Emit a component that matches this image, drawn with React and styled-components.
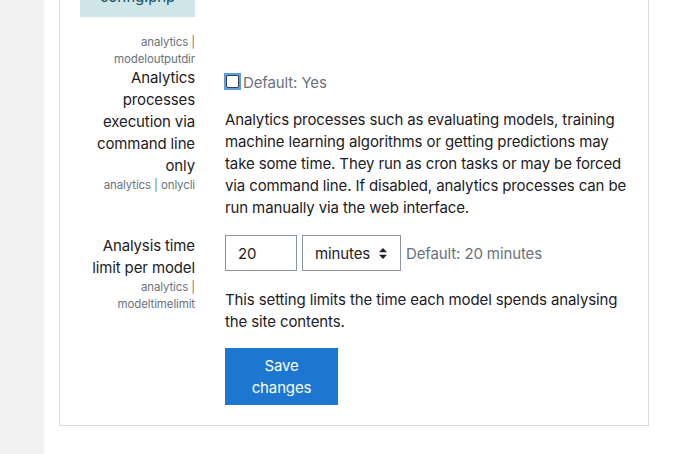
import React from 'react';
import styled, { createGlobalStyle } from 'styled-components';

const Global = createGlobalStyle`
  html, body {
    margin: 0;
    padding: 0;
    background: #fff;
    overflow: hidden;
  }
  body {
    font-family: Inter, "Liberation Sans", Arial, sans-serif;
    color: #1d2125;
    letter-spacing: -0.12px;
  }
`;

const Page = styled.div`
  display: flex;
  height: 454px;
`;

const Drawer = styled.div`
  width: 44px;
  flex-shrink: 0;
  background: #f2f2f2;
`;

const Main = styled.div`
  flex: 1;
  padding-left: 15px;
  padding-right: 40px;
`;

const Panel = styled.div`
  border: 1px solid #dcdcdc;
  border-top: none;
  padding: 0 17px 20px 20px;
  margin-top: -34px;
`;

const Grid = styled.div`
  display: grid;
  grid-template-columns: 115px 1fr;
  column-gap: 30px;
  align-items: start;
`;

const LabelCol = styled.div`
  text-align: right;
  margin-top: ${p => p.$top || 0}px;
`;

const ConfigBox = styled.div`
  background: #cfe6e9;
  color: #0f4f59;
  font-size: 15px;
  line-height: 22px;
  height: 51px;
  text-align: center;
  padding-top: 20px;
  box-sizing: border-box;
  margin-bottom: 17px;
  overflow: hidden;
`;

const Name = styled.div`
  font-size: 15px;
  line-height: 22px;
`;

const Key = styled.div`
  font-size: 11.5px;
  line-height: 16.5px;
  color: #6a737b;
`;

const Content = styled.div`
  margin-top: ${p => p.$top || 0}px;
  padding-right: 4px;
`;

const Inline = styled.div`
  display: flex;
  align-items: center;
  gap: 5px;
`;

const CheckWrap = styled.label`
  display: flex;
  align-items: center;
  height: 30px;
  margin-left: -1px;
`;

const Check = styled.span`
  width: 17px;
  height: 17px;
  background: #5c9ce2;
  display: flex;
  align-items: center;
  justify-content: center;
  margin-top: -1px;
  & > span {
    width: 11px;
    height: 11px;
    background: #fff;
    border: 1px solid #3b3f45;
    border-radius: 2px;
  }
`;

const Hint = styled.span`
  font-size: 15px;
  color: #6a737b;
  margin-left: ${p => p.$gap || 0}px;
`;

const Desc = styled.p`
  font-size: 15px;
  line-height: 22px;
  margin: ${p => p.$top}px 0 0;
`;

const TextBox = styled.div`
  width: 72px;
  height: 36px;
  box-sizing: border-box;
  border: 1px solid #8f959e;
  padding: 0 12px;
  font-size: 15px;
  display: flex;
  align-items: center;
`;

const Select = styled.div`
  width: 99px;
  height: 36px;
  box-sizing: border-box;
  border: 1px solid #8f959e;
  padding: 0 13px 0 12px;
  font-size: 15px;
  display: flex;
  align-items: center;
  justify-content: space-between;
`;

const Arrows = styled.svg`
  width: 8px;
  height: 11px;
`;

const SaveButton = styled.button`
  margin-top: 15px;
  width: 113px;
  height: 57px;
  border: none;
  background: #1d77d0;
  color: #fff;
  font-family: inherit;
  letter-spacing: inherit;
  font-size: 15px;
  line-height: 22px;
  padding: 0 12px;
`;

export default function App() {
  return (
    <>
      <Global />
      <Page>
        <Drawer />
        <Main>
          <Panel>
            <Grid>
              <LabelCol>
                <ConfigBox>config.php</ConfigBox>
                <Key>analytics |<br />modeloutputdir</Key>
              </LabelCol>
              <div />

              <LabelCol>
                <Name>Analytics processes execution via command line only</Name>
                <Key>analytics | onlycli</Key>
              </LabelCol>
              <Content>
                <CheckWrap>
                  <Check><span /></Check>
                  <Hint $gap={2}>Default: Yes</Hint>
                </CheckWrap>
                <Desc $top={12}>
                  Analytics processes such as evaluating models, training machine learning algorithms or getting
                  predictions may take some time. They run as cron tasks or may be forced via command line. If
                  disabled, analytics processes can be run manually via the web interface.
                </Desc>
              </Content>

              <LabelCol $top={16}>
                <Name>Analysis time limit per model</Name>
                <Key>analytics |<br />modeltimelimit</Key>
              </LabelCol>
              <Content $top={16}>
                <Inline>
                  <TextBox>20</TextBox>
                  <Select>
                    minutes
                    <Arrows viewBox="0 0 8 11">
                      <path d="M4 0 L8 4.2 H0 Z M0 6.8 H8 L4 11 Z" fill="#1d2125" />
                    </Arrows>
                  </Select>
                  <Hint>Default: 20 minutes</Hint>
                </Inline>
                <Desc $top={18}>
                  This setting limits the time each model spends analysing the site contents.
                </Desc>
                <SaveButton>Save changes</SaveButton>
              </Content>
            </Grid>
          </Panel>
        </Main>
      </Page>
    </>
  );
}
